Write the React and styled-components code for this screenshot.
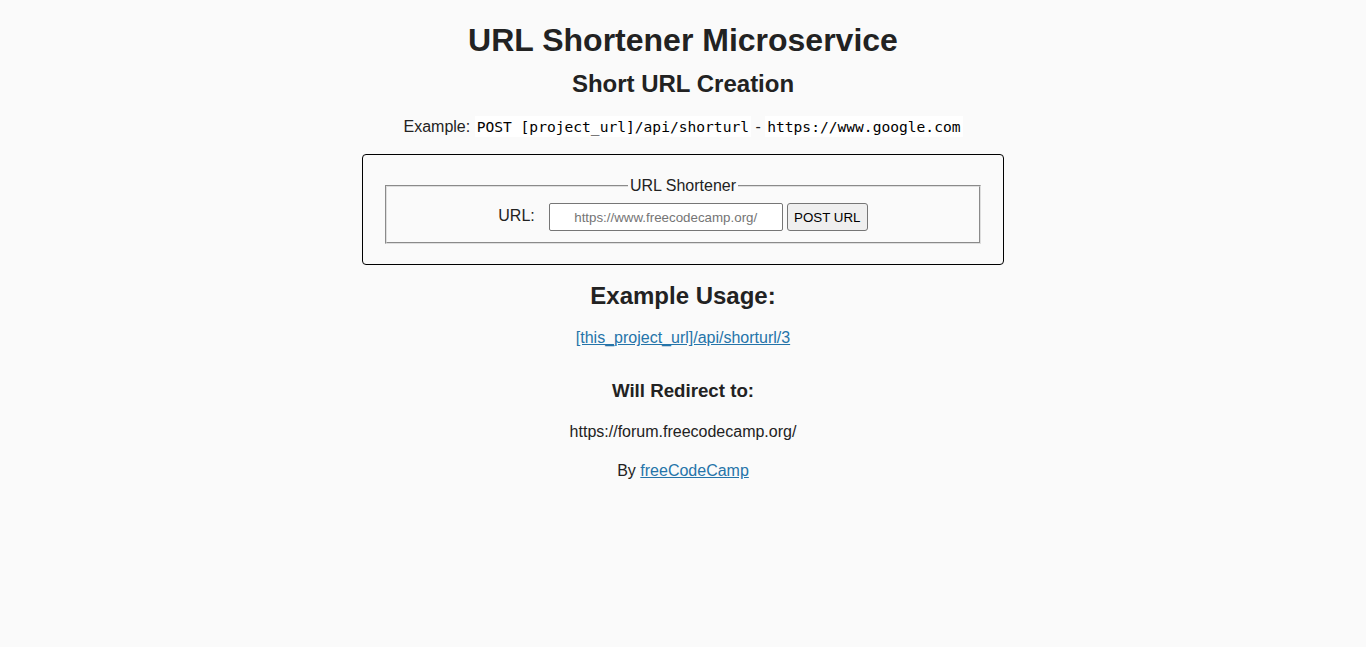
import React from 'react';
import styled, { createGlobalStyle } from 'styled-components';

const GlobalStyle = createGlobalStyle`
  html, body {
    margin: 0;
    padding: 0;
  }

  body {
    font-family: 'Liberation Sans', Arial, Helvetica, sans-serif;
    font-size: 16px;
    color: #222;
    background-color: #fafafa;
    text-align: center;
    line-height: 22.4px;
  }
`;

const Page = styled.div`
  padding: 29.44px 8px 8px;
  min-height: 647px;
  box-sizing: border-box;
`;

const Title = styled.h1`
  font-size: 32px;
  font-weight: bold;
  margin: 0 0 21.44px;
`;

const SectionTitle = styled.h2`
  font-size: 24px;
  font-weight: bold;
  margin: ${p => p.$top || 0}px 0 19.92px;
`;

const SubTitle = styled.h3`
  font-size: 18.72px;
  font-weight: bold;
  margin: 30.6px 0 18.72px;
`;

const Text = styled.p`
  margin: 0 0 16px;
`;

const Code = styled.code`
  font-family: 'DejaVu Sans Mono', 'Liberation Mono', monospace;
  font-size: 14.6px;
  padding: 2px;
  color: black;
  background-color: #fff;
`;

const Link = styled.a`
  color: #2574a9;
`;

const ShortenForm = styled.form`
  width: 600px;
  margin: 0 auto;
  padding: 20px;
  border: 1px solid black;
  border-radius: 4px;
`;

const FieldSet = styled.fieldset`
  margin: 0 2px;
  padding: 5.6px 12px 11px;
  border: 2px groove rgb(222, 222, 222);
`;

const Legend = styled.legend`
  padding: 0 2px;
  margin: 0 auto;
`;

const Label = styled.label`
  padding: 10px;
  margin-right: 4px;
`;

const UrlInput = styled.input`
  box-sizing: border-box;
  width: 234px;
  height: 28px;
  padding: 1px 6px;
  vertical-align: middle;
  text-align: center;
  font-family: 'Liberation Sans', Arial, sans-serif;
  font-size: 13.33px;
  color: #222;
  background: #fff;
  border: 1px solid #767676;
  border-radius: 2px;

  &::placeholder {
    color: #757575;
  }
`;

const SubmitButton = styled.button`
  box-sizing: border-box;
  height: 28px;
  width: 81px;
  margin: 0 10px 0 4px;
  padding: 1px 6px;
  vertical-align: middle;
  font-family: 'Liberation Sans', Arial, sans-serif;
  font-size: 13.33px;
  color: black;
  background: #efefef;
  border: 1px solid #767676;
  border-radius: 3px;
`;

export default function App() {
  return (
    <>
      <GlobalStyle />
      <Page>
        <Title>URL Shortener Microservice</Title>
        <main>
          <section>
            <SectionTitle>Short URL Creation</SectionTitle>
            <Text>
              Example: <Code>POST [project_url]/api/shorturl</Code> - <Code>https://www.google.com</Code>
            </Text>
            <ShortenForm onSubmit={e => e.preventDefault()}>
              <FieldSet>
                <Legend>URL Shortener</Legend>
                <Label htmlFor="url_input">URL:</Label>
                <UrlInput id="url_input" type="text" name="url" placeholder="https://www.freecodecamp.org/" />
                <SubmitButton type="submit">POST URL</SubmitButton>
              </FieldSet>
            </ShortenForm>
          </section>
          <section>
            <SectionTitle $top={20}>Example Usage:</SectionTitle>
            <Link href="#">[this_project_url]/api/shorturl/3</Link>
            <SubTitle>Will Redirect to:</SubTitle>
            <Text>https://forum.freecodecamp.org/</Text>
          </section>
        </main>
        <footer>
          <Text>
            By <Link href="#">freeCodeCamp</Link>
          </Text>
        </footer>
      </Page>
    </>
  );
}
